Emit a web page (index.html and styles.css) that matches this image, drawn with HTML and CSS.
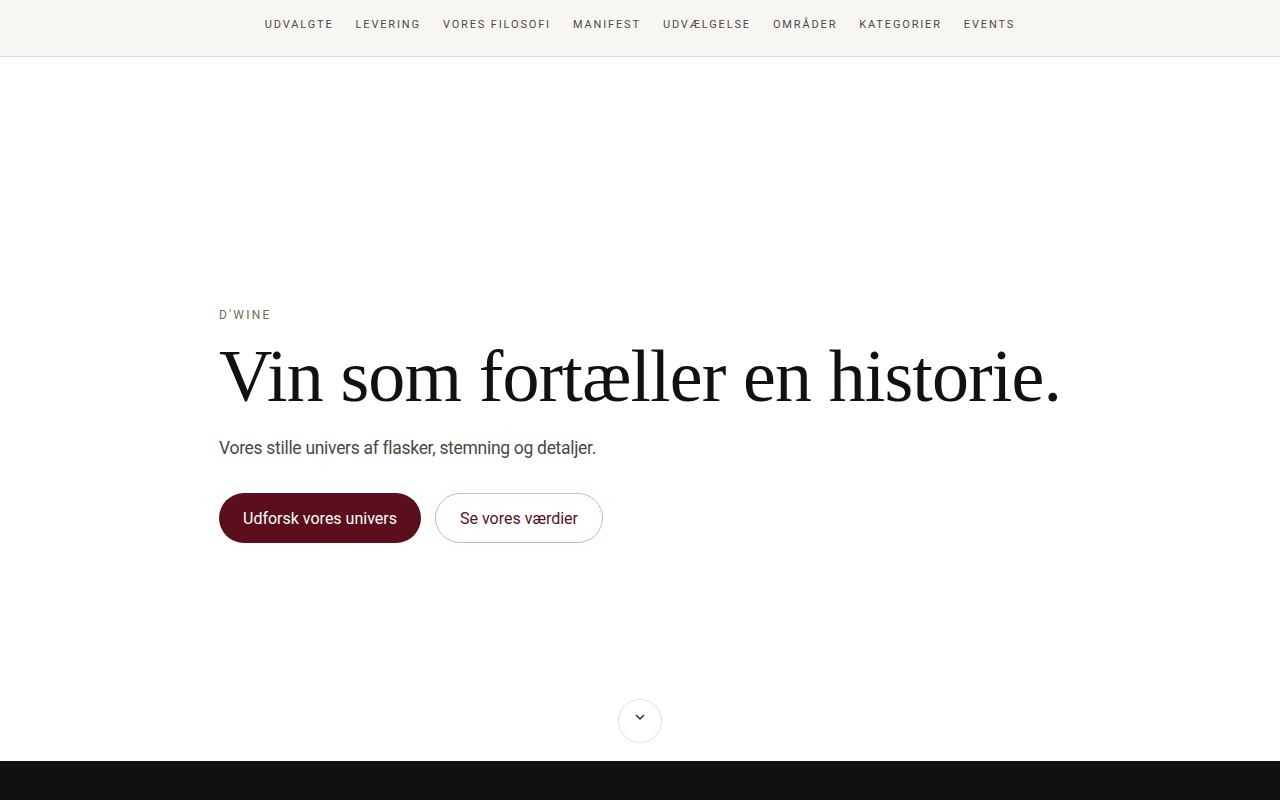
FILE: index.html
```html
<!DOCTYPE html>
<html lang="da">
<head>
    <meta charset="UTF-8">
    <meta name="viewport" content="width=device-width, initial-scale=1.0">
    <title>D'WINE</title>
    <link rel="stylesheet" href="styles.css">
</head>
<body>
    <header class="topbar">
        <nav class="nav">
            <a href="#">Udvalgte</a>
            <a href="#">Levering</a>
            <a href="#">Vores filosofi</a>
            <a href="#">Manifest</a>
            <a href="#">Udvælgelse</a>
            <a href="#">Områder</a>
            <a href="#">Kategorier</a>
            <a href="#">Events</a>
        </nav>
    </header>

    <section class="hero">
        <div class="hero-inner">
            <p class="eyebrow">D'WINE</p>
            <h1>Vin som fortæller en historie.</h1>
            <p class="lead">Vores stille univers af flasker, stemning og detaljer.</p>
            <div class="actions">
                <a href="#" class="btn btn-primary">Udforsk vores univers</a>
                <a href="#" class="btn btn-outline">Se vores værdier</a>
            </div>
        </div>
        <a href="#" class="scroll-down" aria-label="Scroll ned">
            <svg width="12" height="12" viewBox="0 0 12 12" fill="none">
                <path d="M2.5 4.5 6 8l3.5-3.5" stroke="#333" stroke-width="1.6" stroke-linecap="round" stroke-linejoin="round"/>
            </svg>
        </a>
    </section>

    <footer class="dark-band"></footer>
</body>
</html>
```

FILE: styles.css
```css
* {
    margin: 0;
    padding: 0;
    box-sizing: border-box;
}

body {
    font-family: Roboto, "Liberation Sans", Arial, sans-serif;
    background: #fff;
    color: #111;
}

a {
    text-decoration: none;
    color: inherit;
}

.topbar {
    height: 57px;
    background: #f7f6f2;
    border-bottom: 1px solid #dedcd8;
    display: flex;
    align-items: center;
    justify-content: center;
}

.nav {
    display: flex;
    gap: 22px;
    padding-bottom: 7px;
}

.nav a {
    font-size: 11px;
    letter-spacing: 1.85px;
    text-transform: uppercase;
    color: #4a4946;
}

.hero {
    height: 704px;
    display: flex;
    flex-direction: column;
    justify-content: center;
    align-items: center;
    padding-top: 33px;
    position: relative;
}

.hero-inner {
    width: 842px;
}

.eyebrow {
    font-size: 12px;
    letter-spacing: 2.2px;
    color: #6f6d55;
    margin-bottom: 14px;
}

h1 {
    font-family: "Liberation Serif", "Times New Roman", serif;
    font-weight: 400;
    font-size: 74px;
    line-height: 1.1;
    letter-spacing: -0.9px;
    white-space: nowrap;
    color: #121110;
    margin-bottom: 21px;
}

.lead {
    font-size: 17.5px;
    letter-spacing: -0.3px;
    color: #4a4844;
    margin-bottom: 35px;
}

.actions {
    display: flex;
    gap: 14px;
}

.btn {
    height: 50px;
    padding: 0 24px;
    border-radius: 25px;
    display: inline-flex;
    align-items: center;
    font-size: 16px;
}

.btn-primary {
    background: #5b0f1c;
    color: #fff;
}

.btn-outline {
    border: 1px solid #d2b4b8;
    color: #5b0f1c;
}

.scroll-down {
    position: absolute;
    bottom: 18px;
    left: 618px;
    width: 44px;
    height: 44px;
    border: 1px solid #e2e1df;
    border-radius: 50%;
    display: flex;
    align-items: center;
    justify-content: center;
    padding-bottom: 8px;
}

.dark-band {
    height: 39px;
    background: #12110f;
}
```
